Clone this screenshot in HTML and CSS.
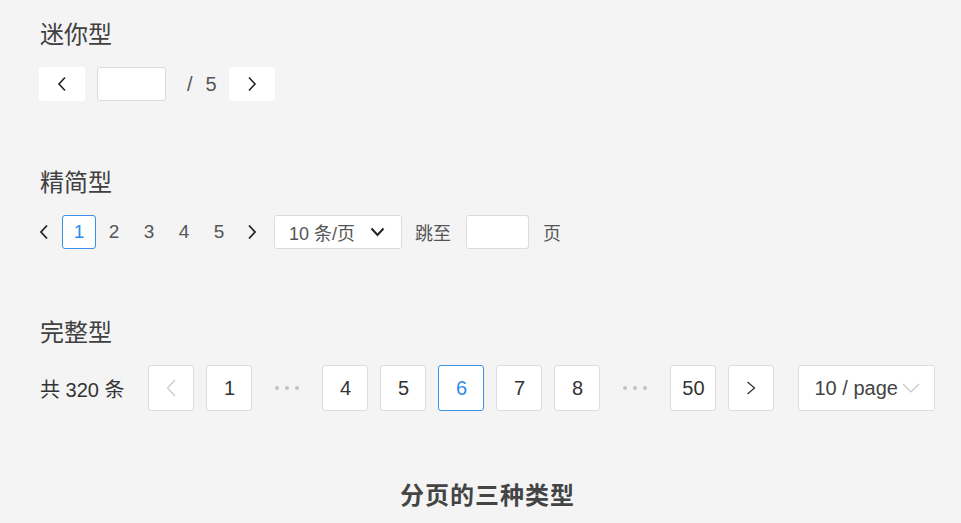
FILE: index.html
```html
<!DOCTYPE html>
<html lang="zh-CN">
<head>
    <meta charset="UTF-8">
    <meta name="viewport" content="width=device-width, initial-scale=1.0">
    <title>分页的三种类型</title>
    <link rel="stylesheet" href="styles.css">
</head>
<body>
    <!-- 迷你型 -->
    <div class="section">
        <h2 class="title">迷你型</h2>
        <div class="mini-row">
            <button class="mini-btn">
                <svg width="10" height="16" viewBox="0 0 10 16"><polyline points="8,1.5 2,8 8,14.5" fill="none" stroke="#222" stroke-width="1.6"/></svg>
            </button>
            <input type="text" class="mini-input">
            <span class="mini-slash">/</span>
            <span class="mini-total">5</span>
            <button class="mini-btn">
                <svg width="10" height="16" viewBox="0 0 10 16"><polyline points="2,1.5 8,8 2,14.5" fill="none" stroke="#222" stroke-width="1.6"/></svg>
            </button>
        </div>
    </div>

    <!-- 精简型 -->
    <div class="section section-gap">
        <h2 class="title">精简型</h2>
        <div class="simple-row">
            <span class="simple-prev">
                <svg width="10" height="16" viewBox="0 0 10 16"><polyline points="8,1.5 2,8 8,14.5" fill="none" stroke="#222" stroke-width="1.8"/></svg>
            </span>
            <span class="simple-page active">1</span>
            <span class="simple-page">2</span>
            <span class="simple-page">3</span>
            <span class="simple-page">4</span>
            <span class="simple-page">5</span>
            <span class="simple-next">
                <svg width="10" height="16" viewBox="0 0 10 16"><polyline points="2,1.5 8,8 2,14.5" fill="none" stroke="#222" stroke-width="1.8"/></svg>
            </span>
            <div class="simple-select">
                <span>10 条/页</span>
                <svg width="15" height="10" viewBox="0 0 15 10"><polyline points="1.5,1.5 7.5,8 13.5,1.5" fill="none" stroke="#222" stroke-width="2"/></svg>
            </div>
            <span class="jump-label">跳至</span>
            <input type="text" class="jump-input">
            <span class="jump-unit">页</span>
        </div>
    </div>

    <!-- 完整型 -->
    <div class="section section-gap-lg">
        <h2 class="title">完整型</h2>
        <div class="full-row">
            <span class="total">共 320 条</span>
            <div class="pager">
                <span class="page-box disabled">
                    <svg width="10" height="18" viewBox="0 0 10 18"><polyline points="9,1 1.5,9 9,17" fill="none" stroke="#c8c8c8" stroke-width="1.2"/></svg>
                </span>
                <span class="page-box">1</span>
                <span class="page-dots"><i></i><i></i><i></i></span>
                <span class="page-box">4</span>
                <span class="page-box">5</span>
                <span class="page-box active">6</span>
                <span class="page-box">7</span>
                <span class="page-box">8</span>
                <span class="page-dots"><i></i><i></i><i></i></span>
                <span class="page-box">50</span>
                <span class="page-box">
                    <svg width="10" height="14" viewBox="0 0 10 14"><polyline points="1.5,1 8.5,7 1.5,13" fill="none" stroke="#333" stroke-width="1.3"/></svg>
                </span>
            </div>
            <div class="full-select">
                <span>10 / page</span>
                <svg width="18" height="10" viewBox="0 0 18 10"><polyline points="1,1 9,9 17,1" fill="none" stroke="#c4c4c4" stroke-width="1.1"/></svg>
            </div>
        </div>
    </div>

    <div class="caption">分页的三种类型</div>
</body>
</html>
```

FILE: styles.css
```css
body {
    margin: 0;
    padding: 20px 0 0 40px;
    font-family: "Liberation Sans", "Noto Sans CJK SC", sans-serif;
    background-color: #f4f4f5;
    color: #333;
}
button, input {
    font-family: inherit;
    outline: none;
}
.title {
    margin: 0 0 17px;
    font-size: 24px;
    line-height: 30px;
    font-weight: normal;
    color: #404040;
}
.section-gap {
    margin-top: 67px;
}
.section-gap-lg {
    margin-top: 69px;
}

/* 迷你型 */
.mini-row {
    display: flex;
    align-items: center;
    margin-left: -1px;
}
.mini-btn {
    width: 46px;
    height: 34px;
    border: none;
    border-radius: 3px;
    background: #fff;
    padding: 0;
    display: flex;
    align-items: center;
    justify-content: center;
}
.mini-input {
    width: 69px;
    height: 34px;
    box-sizing: border-box;
    margin-left: 12px;
    border: 1px solid #d9d9d9;
    border-radius: 3px;
    background: #fff;
}
.mini-slash {
    margin-left: 21px;
    font-size: 20px;
    color: #555;
}
.mini-total {
    margin-left: 13px;
    font-size: 20px;
    color: #555;
}
.mini-row .mini-btn:last-child {
    margin-left: 12px;
}

/* 精简型 */
.simple-row {
    display: flex;
    align-items: center;
    height: 34px;
    margin-left: -1px;
    font-size: 18px;
    color: #555;
}
.simple-prev {
    width: 23px;
    display: flex;
    align-items: center;
}
.simple-page {
    width: 34px;
    height: 34px;
    margin-right: 1px;
    box-sizing: border-box;
    display: flex;
    align-items: center;
    justify-content: center;
    font-size: 19px;
}
.simple-page.active {
    border: 1px solid #3b90e8;
    border-radius: 3px;
    background: #fff;
    color: #2d8cf0;
}
.simple-next {
    width: 31px;
    display: flex;
    align-items: center;
    justify-content: center;
    margin-left: -1px;
}
.simple-select {
    width: 128px;
    height: 34px;
    box-sizing: border-box;
    margin-left: 7px;
    padding: 0 16px 0 14px;
    border: 1px solid #dcdcdc;
    border-radius: 3px;
    background: #fff;
    display: flex;
    align-items: center;
    justify-content: space-between;
    color: #555;
}
.jump-label {
    margin-left: 13px;
}
.jump-input {
    width: 63px;
    height: 34px;
    box-sizing: border-box;
    margin-left: 15px;
    border: 1px solid #dcdcdc;
    border-radius: 3px;
    background: #fff;
}
.jump-unit {
    margin-left: 14px;
}

/* 完整型 */
.full-row {
    display: flex;
    align-items: center;
    font-size: 20px;
}
.total {
    margin-right: 24px;
    color: #333;
}
.pager {
    display: flex;
    gap: 12px;
}
.page-box {
    width: 46px;
    height: 46px;
    box-sizing: border-box;
    border: 1px solid #dcdcdc;
    border-radius: 3px;
    background: #fff;
    display: flex;
    align-items: center;
    justify-content: center;
    color: #333;
}
.page-box.active {
    border-color: #3b90e8;
    color: #2d8cf0;
}
.page-dots {
    width: 46px;
    height: 46px;
    display: flex;
    align-items: center;
    justify-content: center;
    gap: 6px;
}
.page-dots i {
    width: 4px;
    height: 4px;
    border-radius: 50%;
    background: #c2c2c2;
}
.full-select {
    width: 137px;
    height: 46px;
    box-sizing: border-box;
    margin-left: 24px;
    padding-left: 15px;
    border: 1px solid #dcdcdc;
    border-radius: 3px;
    background: #fff;
    display: flex;
    align-items: center;
    gap: 4px;
    color: #444;
}

.caption {
    margin-top: 70px;
    padding-right: 26px;
    text-align: center;
    font-size: 24px;
    line-height: 30px;
    font-weight: bold;
    letter-spacing: 1px;
    color: #444;
}
```
